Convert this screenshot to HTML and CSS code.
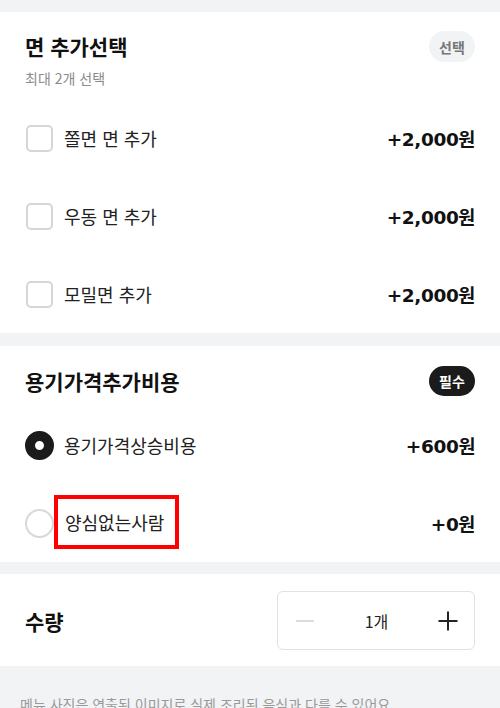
FILE: index.html
```html
<!DOCTYPE html>
<html lang="ko">
<head>
  <meta charset="UTF-8">
  <meta name="viewport" content="width=device-width, initial-scale=1">
  <title>메뉴 옵션</title>
  <link rel="stylesheet" href="styles.css">
</head>
<body>

  <!-- 면 추가선택 -->
  <section class="group">
    <div class="group-head">
      <div>
        <h2 class="group-title">면 추가선택</h2>
        <p class="group-sub">최대 2개 선택</p>
      </div>
      <span class="tag">선택</span>
    </div>

    <label class="option">
      <span class="check"></span>
      <span class="option-name">쫄면 면 추가</span>
      <span class="price">+2,000원</span>
    </label>
    <label class="option">
      <span class="check"></span>
      <span class="option-name">우동 면 추가</span>
      <span class="price">+2,000원</span>
    </label>
    <label class="option">
      <span class="check"></span>
      <span class="option-name">모밀면 추가</span>
      <span class="price">+2,000원</span>
    </label>
  </section>

  <!-- 용기가격 -->
  <section class="group second">
    <div class="group-head tight">
      <h2 class="group-title">용기가격추가비용</h2>
      <span class="tag tag-dark">필수</span>
    </div>

    <label class="option">
      <span class="radio on"></span>
      <span class="option-name">용기가격상승비용</span>
      <span class="price">+600원</span>
    </label>
    <label class="option">
      <span class="radio"></span>
      <span class="option-name marked">양심없는사람</span>
      <span class="price">+0원</span>
    </label>
  </section>

  <!-- 수량 -->
  <section class="group qty">
    <h2 class="group-title">수량</h2>
    <div class="stepper">
      <button class="step minus" type="button">
        <svg width="20" height="20" viewBox="0 0 20 20"><path d="M1 10h18" stroke="#d4d4d4" stroke-width="1.6"/></svg>
      </button>
      <span class="count">1개</span>
      <button class="step plus" type="button">
        <svg width="20" height="20" viewBox="0 0 20 20"><path d="M0.5 10h19M10 0.5v19" stroke="#222" stroke-width="2"/></svg>
      </button>
    </div>
  </section>

  <p class="notice">메뉴 사진은 연출된 이미지로 실제 조리된 음식과 다를 수 있어요.</p>

</body>
</html>
```

FILE: styles.css
```css
* {
  margin: 0;
  padding: 0;
  box-sizing: border-box;
}

html, body {
  height: 100%;
  overflow: hidden;
}

body {
  background: #f2f3f5;
  padding-top: 12px;
  font-family: "Noto Sans CJK KR", "Noto Sans", sans-serif;
  color: #222;
}

.group {
  background: #fff;
  padding: 20px 25px 0;
  margin-bottom: 13px;
}

.group.second {
  margin-bottom: 12px;
}

.group-head {
  display: flex;
  justify-content: space-between;
  align-items: flex-start;
  margin-bottom: 12px;
}

.group-head.tight {
  align-items: center;
  margin-bottom: 10px;
}

.group-title {
  font-size: 21px;
  font-weight: 700;
  line-height: 28px;
  color: #111;
}

.group-sub {
  margin-top: 9px;
  font-size: 14px;
  line-height: 18px;
  color: #8a8a8a;
}

.tag {
  display: inline-flex;
  align-items: center;
  justify-content: center;
  width: 46px;
  height: 31px;
  margin-top: -1px;
  border-radius: 16px;
  background: #f2f3f5;
  color: #777;
  font-size: 14px;
  font-weight: 700;
}

.tag-dark {
  margin-top: 0;
  height: 30px;
  background: #1b1b1b;
  color: #fff;
}

.option {
  display: flex;
  align-items: center;
  height: 78px;
}

.check {
  width: 27px;
  height: 27px;
  margin-left: 1px;
  border: 2px solid #d6d6d6;
  border-radius: 5px;
}

.radio {
  width: 29px;
  height: 29px;
  border: 2px solid #d8d8d8;
  border-radius: 50%;
}

.radio.on {
  border: 10px solid #1b1b1b;
  background: #fff;
}

.option-name {
  flex: 1;
  margin-left: 11px;
  font-size: 18px;
  color: #222;
}

.radio + .option-name {
  margin-left: 10px;
}

/* 빨간 표시 박스 */
.option-name.marked {
  flex: 0 0 auto;
  margin: -3px auto 0 0;
  padding: 10px 8px 10px 7px;
  border: 4px solid #ff0000;
  line-height: 26px;
  width: 125px;
}

.price {
  font-family: "DejaVu Sans", "Noto Sans CJK KR", sans-serif;
  font-size: 18.5px;
  font-weight: 700;
  letter-spacing: -0.4px;
  color: #111;
}

.qty {
  display: flex;
  align-items: center;
  justify-content: space-between;
  padding: 17px 25px 16px;
  margin-bottom: 0;
}

.stepper {
  display: flex;
  align-items: center;
  justify-content: space-between;
  width: 198px;
  height: 59px;
  padding: 0 16px 0 17px;
  border: 1px solid #e2e2e2;
  border-radius: 6px;
}

.step {
  border: none;
  background: none;
  display: flex;
}

.count {
  font-size: 16px;
  color: #222;
}

.notice {
  padding: 28px 20px 0;
  font-size: 14px;
  color: #999;
}
```
